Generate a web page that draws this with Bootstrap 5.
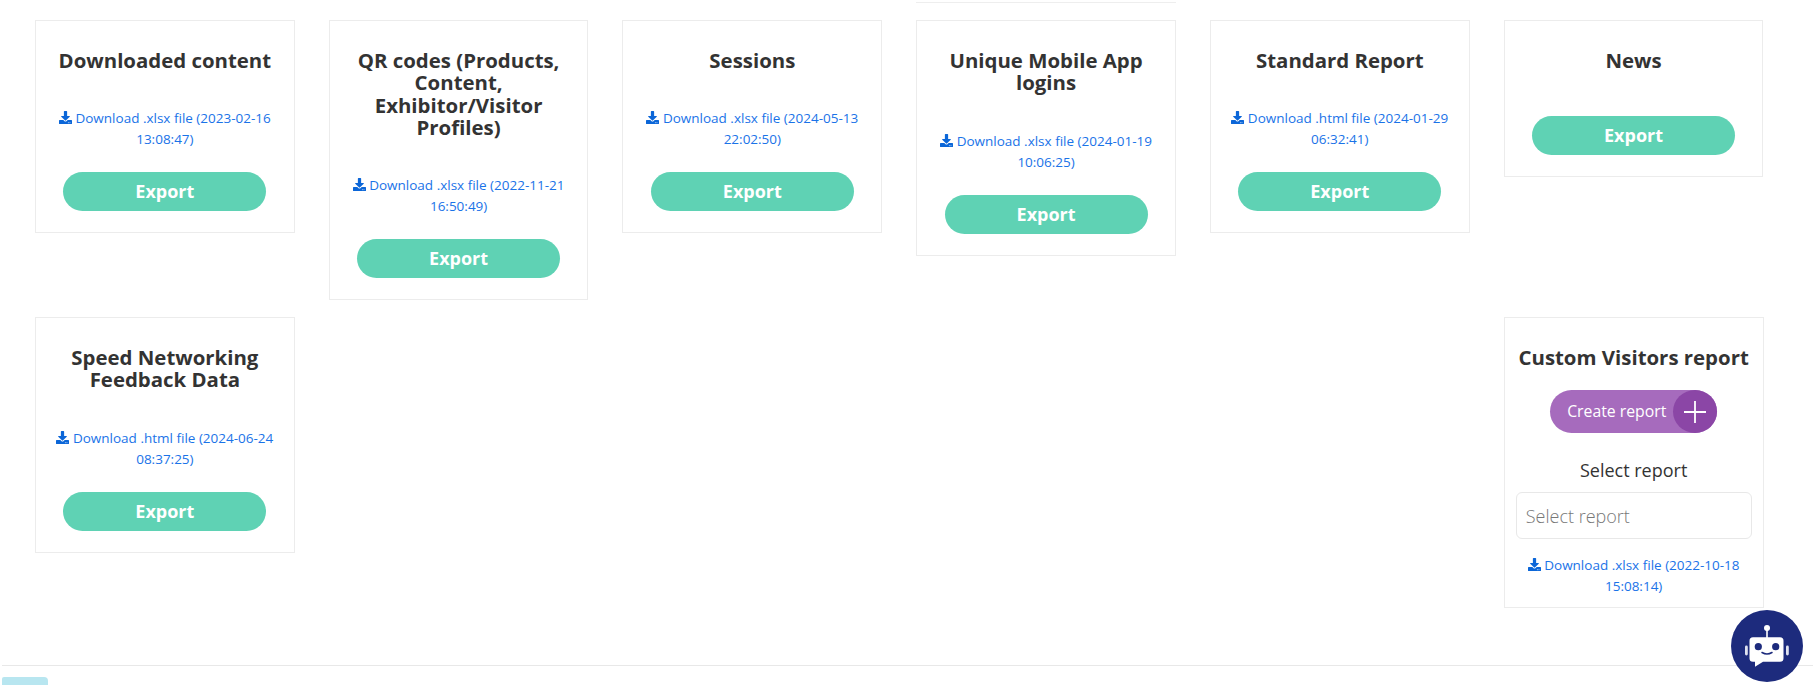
<!DOCTYPE html>
<html lang="en">
<head>
  <meta charset="UTF-8">
  <title>Reports</title>
  <link href="https://cdn.jsdelivr.net/npm/bootstrap@5.3.0/dist/css/bootstrap.min.css" rel="stylesheet">
  <style>
    html, body {
      height: 685px;
      overflow: hidden;
    }
    body {
      font-family: "Open Sans", sans-serif;
      color: #333;
      background: #fff;
    }
    .page-wrap {
      padding: 2px 49.5px 0 35px;
    }
    .report-row {
      --bs-gutter-x: 34px;
      --bs-gutter-y: 0;
      align-items: flex-start;
    }
    .top-edge {
      height: 1px;
      background: #eee;
    }
    .top-gap {
      margin-bottom: 17px;
    }
    .row-gap {
      margin-bottom: 17px;
    }
    .report-box {
      border: 1px solid #ececec;
      padding: 28px 10px 21px;
      text-align: center;
    }
    .report-box h3 {
      font-family: "Open Sans", sans-serif;
      font-size: 20.4px;
      font-weight: 700;
      line-height: 22.3px;
      color: #333;
      margin: 0;
    }
    .dl-link {
      display: block;
      font-size: 13.5px;
      line-height: 21px;
      color: #1a73e8;
      text-decoration: none;
      margin-top: 37px;
    }
    .dl-link svg {
      width: 13px;
      height: 13px;
      fill: #0b66d8;
      vertical-align: -1px;
    }
    .btn-export {
      display: block;
      width: 203px;
      height: 39px;
      margin: 22px auto 0;
      padding: 0;
      border: 0;
      border-radius: 20px;
      background: #5fd2b4;
      color: #fff;
      font-size: 18px;
      font-weight: 700;
      line-height: 39px;
    }
    .report-box h3 + .btn-export {
      margin-top: 45px;
    }
    .btn-create {
      width: 167px;
      height: 43px;
      margin: 22px auto 0;
      padding: 0 0 0 17px;
      border: 0;
      border-radius: 22px;
      background: #a66bbd;
      color: #fff;
      font-size: 15.8px;
      line-height: 43px;
    }
    .btn-create .plus-dot {
      width: 44px;
      height: 43px;
      border-radius: 50%;
      background: #8b46a6;
    }
    .btn-create svg {
      width: 22px;
      height: 22px;
      stroke: #fff;
      stroke-width: 1.8;
    }
    .select-label {
      font-size: 18px;
      line-height: 24px;
      margin: 25px 0 10px;
    }
    .report-box .report-input {
      height: 47px;
      border: 1px solid #e8e8e8;
      border-radius: 6px;
      padding: 0 9px;
      font-size: 18px;
      font-weight: 300;
    }
    .report-input::placeholder {
      color: #777;
    }
    .custom-box .dl-link {
      margin-top: 16px;
    }
    .custom-box {
      padding: 28px 11px 10px;
    }
    .foot-line {
      height: 1px;
      background: #e8e8e8;
      margin: 57px 0 0 2px;
    }
    .foot-tab {
      width: 46px;
      height: 8px;
      margin: 11px 0 0 2px;
      background: #b8e6f0;
      border-radius: 2px 4px 0 0;
    }
    .bot-btn {
      position: fixed;
      left: 1731px;
      top: 610px;
      width: 72px;
      height: 72px;
      border-radius: 50%;
      background: #1d2b7d;
    }
  </style>
</head>
<body>
  <div class="page-wrap">
    <div class="row report-row top-gap">
      <div class="col-2 offset-6"><div class="top-edge"></div></div>
    </div>

    <!-- first row -->
    <div class="row report-row row-gap">
      <div class="col-2">
        <div class="report-box">
          <h3>Downloaded content</h3>
          <a href="#" class="dl-link"><svg viewBox="0 0 512 512"><use href="#ic-download"/></svg> Download .xlsx file (2023-02-16 13:08:47)</a>
          <button class="btn btn-export">Export</button>
        </div>
      </div>
      <div class="col-2">
        <div class="report-box">
          <h3>QR codes (Products, Content, Exhibitor/Visitor Profiles)</h3>
          <a href="#" class="dl-link"><svg viewBox="0 0 512 512"><use href="#ic-download"/></svg> Download .xlsx file (2022-11-21 16:50:49)</a>
          <button class="btn btn-export">Export</button>
        </div>
      </div>
      <div class="col-2">
        <div class="report-box">
          <h3>Sessions</h3>
          <a href="#" class="dl-link"><svg viewBox="0 0 512 512"><use href="#ic-download"/></svg> Download .xlsx file (2024-05-13 22:02:50)</a>
          <button class="btn btn-export">Export</button>
        </div>
      </div>
      <div class="col-2">
        <div class="report-box">
          <h3>Unique Mobile App logins</h3>
          <a href="#" class="dl-link"><svg viewBox="0 0 512 512"><use href="#ic-download"/></svg> Download .xlsx file (2024-01-19 10:06:25)</a>
          <button class="btn btn-export">Export</button>
        </div>
      </div>
      <div class="col-2">
        <div class="report-box">
          <h3>Standard Report</h3>
          <a href="#" class="dl-link"><svg viewBox="0 0 512 512"><use href="#ic-download"/></svg> Download .html file (2024-01-29 06:32:41)</a>
          <button class="btn btn-export">Export</button>
        </div>
      </div>
      <div class="col-2">
        <div class="report-box">
          <h3>News</h3>
          <button class="btn btn-export">Export</button>
        </div>
      </div>
    </div>

    <!-- second row -->
    <div class="row report-row">
      <div class="col-2">
        <div class="report-box">
          <h3>Speed Networking Feedback Data</h3>
          <a href="#" class="dl-link"><svg viewBox="0 0 512 512"><use href="#ic-download"/></svg> Download .html file (2024-06-24 08:37:25)</a>
          <button class="btn btn-export">Export</button>
        </div>
      </div>
      <div class="col-2 ms-auto">
        <div class="report-box custom-box">
          <h3>Custom Visitors report</h3>
          <button class="btn btn-create d-flex align-items-center justify-content-between">
            <span>Create report</span>
            <span class="plus-dot d-flex align-items-center justify-content-center">
              <svg viewBox="0 0 22 22"><path d="M11 0v22M0 11h22"/></svg>
            </span>
          </button>
          <div class="select-label">Select report</div>
          <input type="text" class="form-control report-input" placeholder="Select report">
          <a href="#" class="dl-link"><svg viewBox="0 0 512 512"><use href="#ic-download"/></svg> Download .xlsx file (2022-10-18 15:08:14)</a>
        </div>
      </div>
    </div>
  </div>

  <div class="foot-line"></div>
  <div class="foot-tab"></div>

  <a href="#" class="bot-btn">
    <svg width="72" height="72" viewBox="0 0 72 72" class="d-block">
      <circle cx="36" cy="18" r="3" fill="#fff"/>
      <rect x="35.2" y="20" width="1.6" height="8" fill="#fff"/>
      <rect x="14" y="35.5" width="2.8" height="10" rx="1.4" fill="#dfe2f0"/>
      <rect x="55" y="35.5" width="2.8" height="10" rx="1.4" fill="#dfe2f0"/>
      <path d="M22 27.3h27a3.5 3.5 0 0 1 3.5 3.5v17.4a3.5 3.5 0 0 1-3.5 3.5H32l-8 5v-5h-2a3.5 3.5 0 0 1-3.5-3.5V30.8a3.5 3.5 0 0 1 3.5-3.5z" fill="#fff"/>
      <circle cx="27.3" cy="36.7" r="3.6" fill="#1d2b7d"/>
      <circle cx="44.7" cy="36.7" r="3.6" fill="#1d2b7d"/>
      <path d="M31 42.5q5 3 10 0" fill="none" stroke="#1d2b7d" stroke-width="1.5" stroke-linecap="round"/>
    </svg>
  </a>

  <svg width="0" height="0" class="d-block">
    <defs>
      <path id="ic-download" d="M216 0h80c13.3 0 24 10.7 24 24v168h87.7c17.8 0 26.7 21.5 14.1 34.1L269.7 378.3c-7.5 7.5-19.8 7.5-27.3 0L90.1 226.1c-12.6-12.6-3.7-34.1 14.1-34.1H192V24c0-13.3 10.7-24 24-24zm296 376v112c0 13.3-10.7 24-24 24H24c-13.3 0-24-10.7-24-24V376c0-13.3 10.7-24 24-24h146.7l49 49c20.1 20.1 52.5 20.1 72.6 0l49-49H488c13.3 0 24 10.7 24 24zm-124 88c0-11-9-20-20-20s-20 9-20 20 9 20 20 20 20-9 20-20zm64 0c0-11-9-20-20-20s-20 9-20 20 9 20 20 20 20-9 20-20z"/>
    </defs>
  </svg>
  <script src="https://cdn.jsdelivr.net/npm/bootstrap@5.3.0/dist/js/bootstrap.bundle.min.js"></script>
</body>
</html>
